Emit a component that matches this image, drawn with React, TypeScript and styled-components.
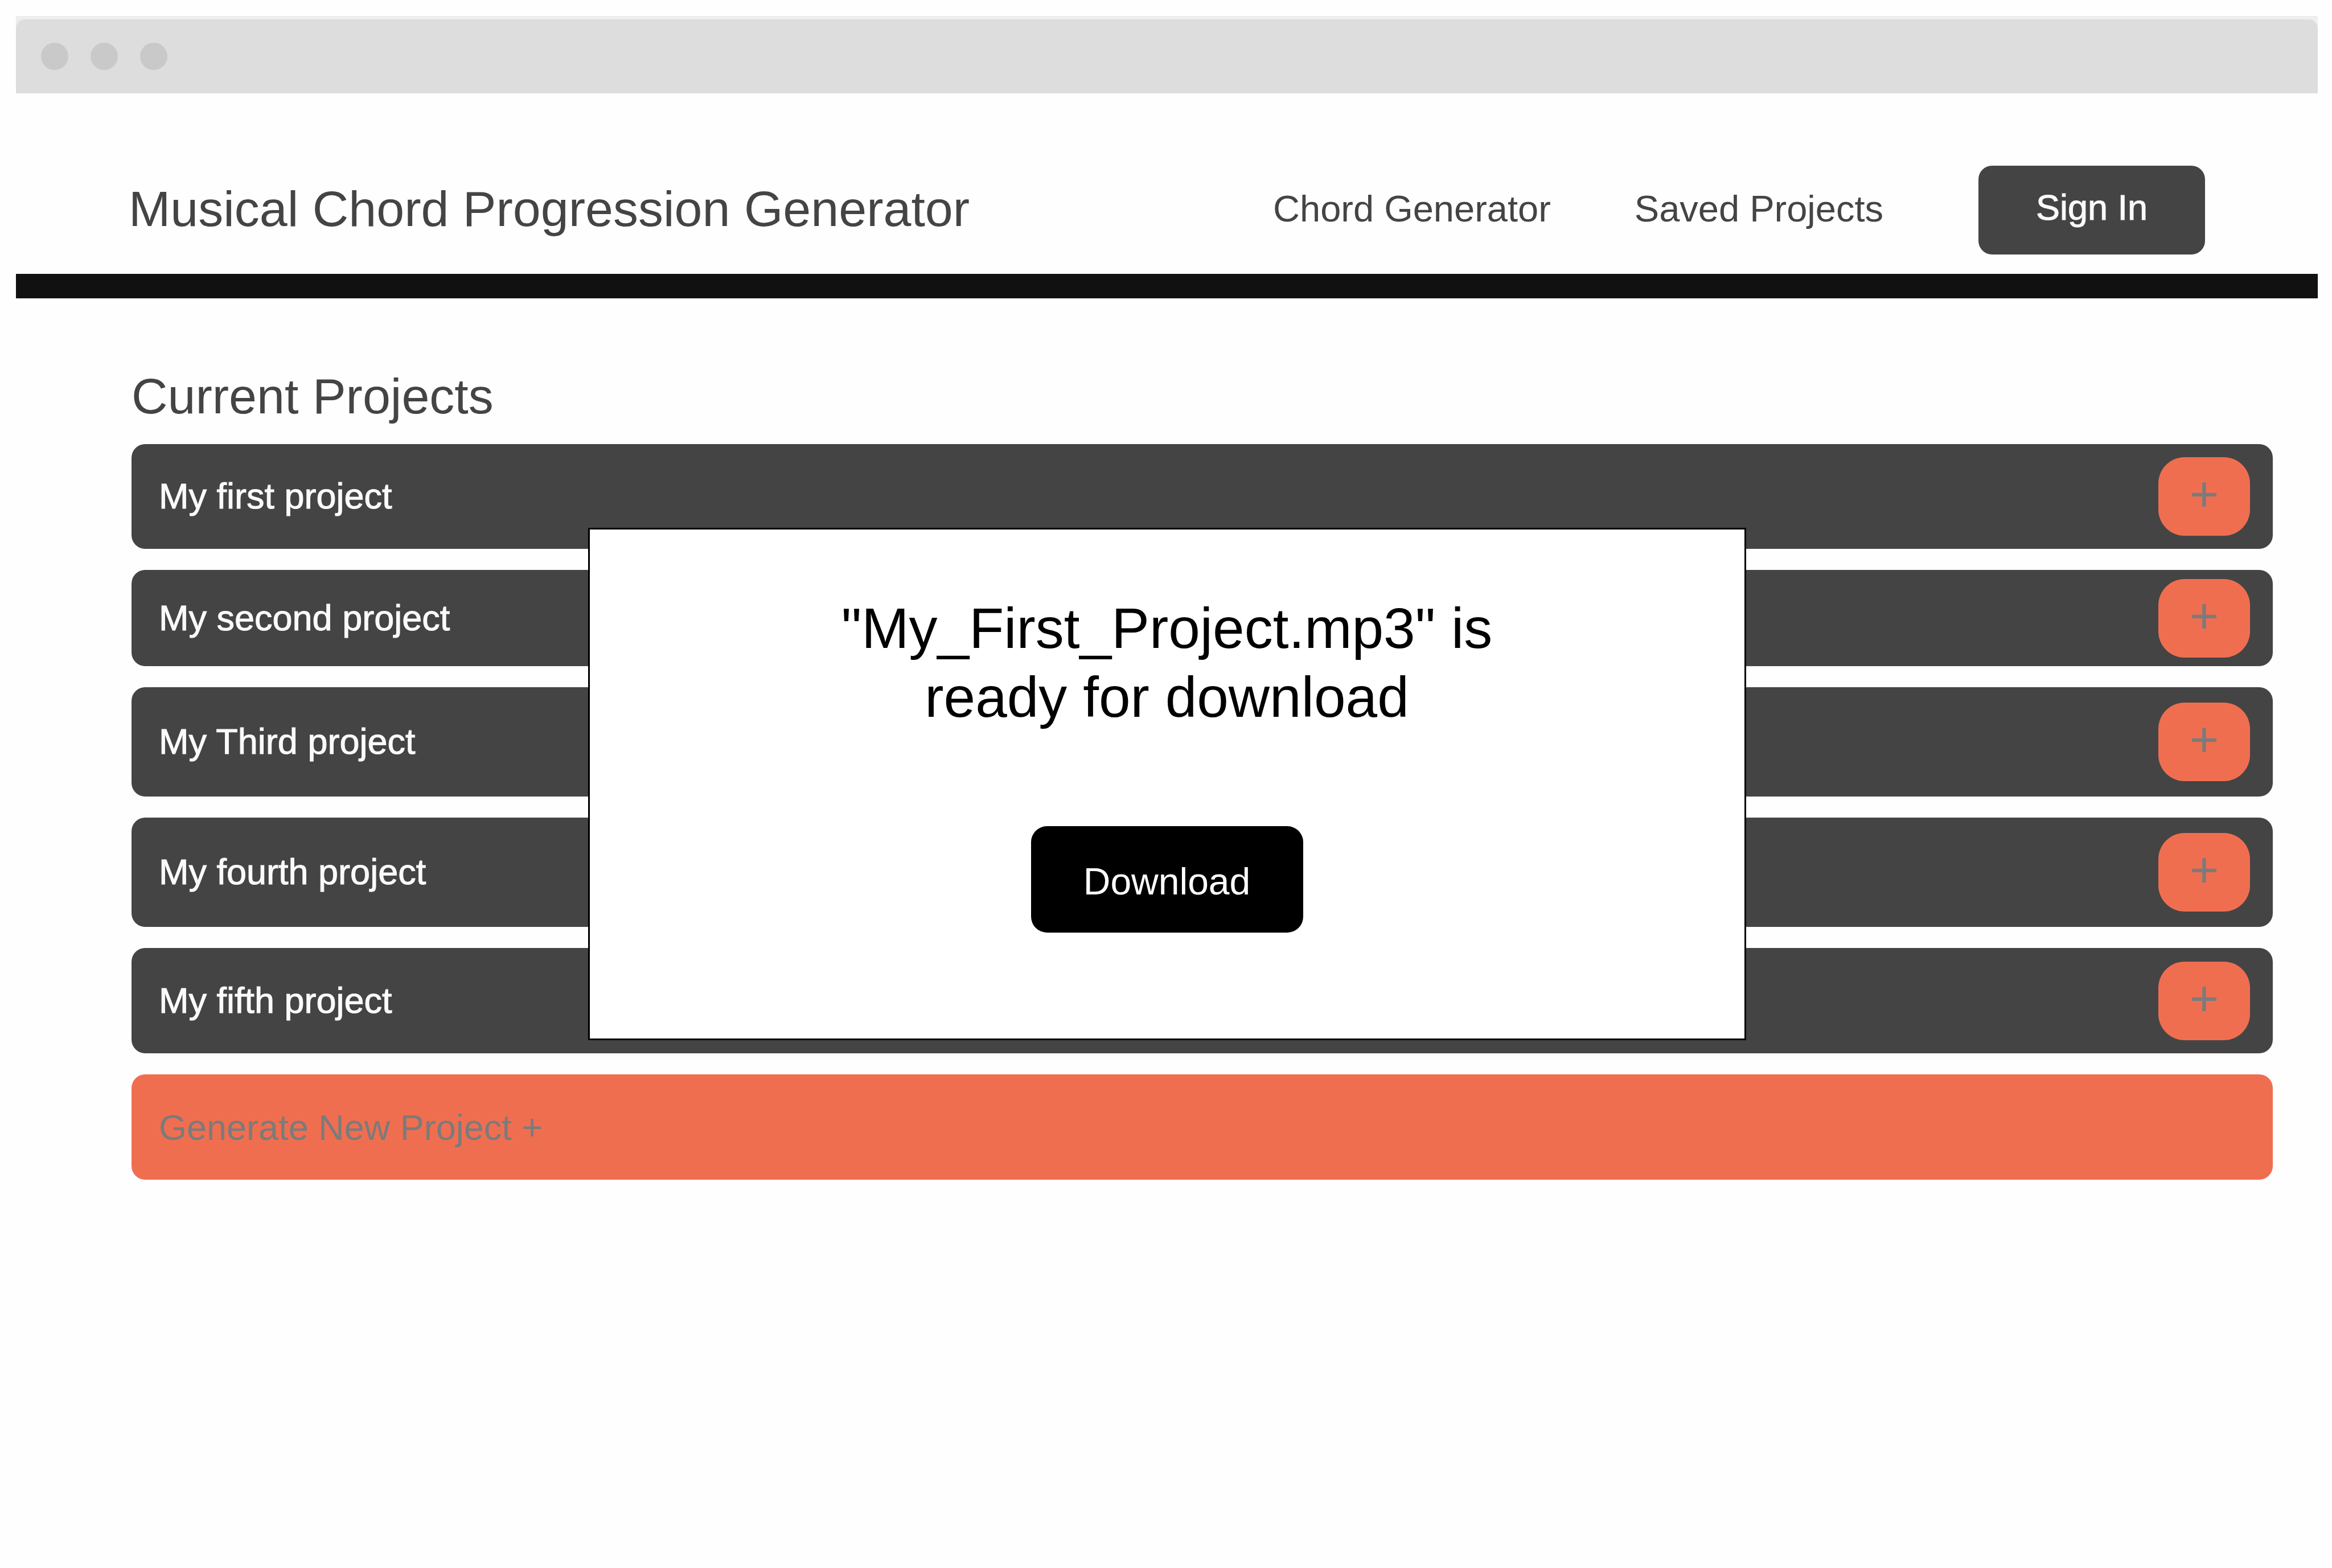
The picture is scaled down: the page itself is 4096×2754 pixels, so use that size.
import React from "react";
import styled, { createGlobalStyle } from "styled-components";

const color = {
  page: "#fefefe",
  chromeEdge: "#eeeeee",
  chrome: "#dddddd",
  dot: "#c9c9c9",
  ink: "#444444",
  rule: "#111111",
  accent: "#f06e50",
  muted: "#7b7b7b",
  light: "#fafafa",
};

const text = { title: "88px", link: "65px", body: "63px" };
const sans = `"Liberation Sans", Arial, Helvetica, sans-serif`;

const GlobalStyle = createGlobalStyle`
  *, *::before, *::after { box-sizing: border-box; }
  body { margin: 0; background: ${color.page}; font-family: ${sans}; }
  button { border: 0; font-family: inherit; cursor: pointer; }
`;

const Page = styled.div`
  position: relative;
  min-height: 100vh;
  padding: 28px 25px 28px 28px;
  color: ${color.ink};
`;

const WindowBar = styled.div`
  height: 136px;
  padding-top: 6px;
  background: ${color.chromeEdge};
`;

const WindowBarInner = styled.div`
  display: flex;
  align-items: center;
  gap: 39px;
  height: 100%;
  padding: 0 44px;
  background: ${color.chrome};
  border-radius: 16px 16px 0 0;
`;

const Dot = styled.span`
  width: 48px;
  height: 48px;
  border-radius: 50%;
  background: ${color.dot};
`;

const Header = styled.header`
  display: flex;
  align-items: center;
  padding: 127px 198px 34px;
  border-bottom: 43px solid ${color.rule};
`;

const Brand = styled.h1`
  margin: 0 auto 0 0;
  padding-bottom: 4px;
  font-size: ${text.title};
  font-weight: 400;
  line-height: 104px;
`;

const Nav = styled.nav`
  display: flex;
  gap: 147px;
  margin-right: 167px;
  padding-bottom: 4px;
`;

const NavLink = styled.a`
  color: inherit;
  font-size: ${text.link};
  line-height: 76px;
  text-decoration: none;
`;

const SignInButton = styled.button`
  width: 398px;
  height: 156px;
  padding: 0 0 10px;
  border-radius: 24px;
  background: ${color.ink};
  color: ${color.light};
  font-size: ${text.body};
  line-height: 76px;
  -webkit-text-stroke: 1px currentColor;
`;

const Main = styled.main`
  padding: 120px 79px 0 203px;
`;

const SectionTitle = styled.h2`
  margin: 0 0 32px;
  font-size: ${text.title};
  font-weight: 400;
  line-height: 104px;
`;

const ProjectList = styled.ul`
  display: flex;
  flex-direction: column;
  gap: 37px;
  margin: 0 0 37px;
  padding: 0;
  list-style: none;
`;

const ProjectRow = styled.li<{ $height: number }>`
  display: flex;
  align-items: center;
  justify-content: space-between;
  height: ${(p) => p.$height}px;
  padding: 0 40px 0 48px;
  border-radius: 24px;
  background: ${color.ink};
`;

const ProjectName = styled.span`
  padding-bottom: 2px;
  color: ${color.light};
  font-size: ${text.body};
  line-height: 76px;
  -webkit-text-stroke: 1px currentColor;
`;

const AddButton = styled.button`
  width: 161px;
  height: 138px;
  padding: 0 0 8px;
  border-radius: 46px;
  background: ${color.accent};
  color: ${color.muted};
  font-size: ${text.title};
  line-height: 104px;
`;

const NewProjectButton = styled.button`
  display: block;
  width: 100%;
  height: 185px;
  padding: 0 48px;
  border-radius: 24px;
  background: ${color.accent};
  color: ${color.muted};
  font-size: ${text.body};
  line-height: 76px;
  text-align: left;
`;

const Overlay = styled.div`
  position: absolute;
  inset: 28px 25px 28px 28px;
  display: grid;
  place-items: center;
`;

const Dialog = styled.section`
  display: flex;
  flex-direction: column;
  align-items: center;
  width: 2034px;
  max-width: 90%;
  padding: 113px 40px 186px;
  border: 3px solid #000000;
  background: #ffffff;
  color: #000000;
`;

const DialogMessage = styled.p`
  max-width: 1300px;
  margin: 0 0 166px;
  font-size: 100px;
  line-height: 121px;
  text-align: center;
`;

const DownloadButton = styled.button`
  width: 478px;
  height: 187px;
  padding: 6px 0 0;
  border-radius: 28px;
  background: #000000;
  color: #ffffff;
  font-size: 66px;
  line-height: 76px;
`;

const projects = [
  { name: "My first project", height: 184 },
  { name: "My second project", height: 169 },
  { name: "My Third project", height: 192 },
  { name: "My fourth project", height: 192 },
  { name: "My fifth project", height: 185 },
];

export default function App() {
  return (
    <Page>
      <GlobalStyle />
      <WindowBar>
        <WindowBarInner>
          <Dot />
          <Dot />
          <Dot />
        </WindowBarInner>
      </WindowBar>

      <Header>
        <Brand>Musical Chord Progression Generator</Brand>
        <Nav>
          <NavLink href="#generator">Chord Generator</NavLink>
          <NavLink href="#projects">Saved Projects</NavLink>
        </Nav>
        <SignInButton type="button">Sign In</SignInButton>
      </Header>

      <Main>
        <SectionTitle>Current Projects</SectionTitle>
        <ProjectList>
          {projects.map((project) => (
            <ProjectRow key={project.name} $height={project.height}>
              <ProjectName>{project.name}</ProjectName>
              <AddButton type="button">+</AddButton>
            </ProjectRow>
          ))}
        </ProjectList>
        <NewProjectButton type="button">Generate New Project +</NewProjectButton>
      </Main>

      <Overlay>
        <Dialog role="dialog" aria-labelledby="download-message">
          <DialogMessage id="download-message">
            "My_First_Project.mp3" is ready for download
          </DialogMessage>
          <DownloadButton type="button">Download</DownloadButton>
        </Dialog>
      </Overlay>
    </Page>
  );
}
